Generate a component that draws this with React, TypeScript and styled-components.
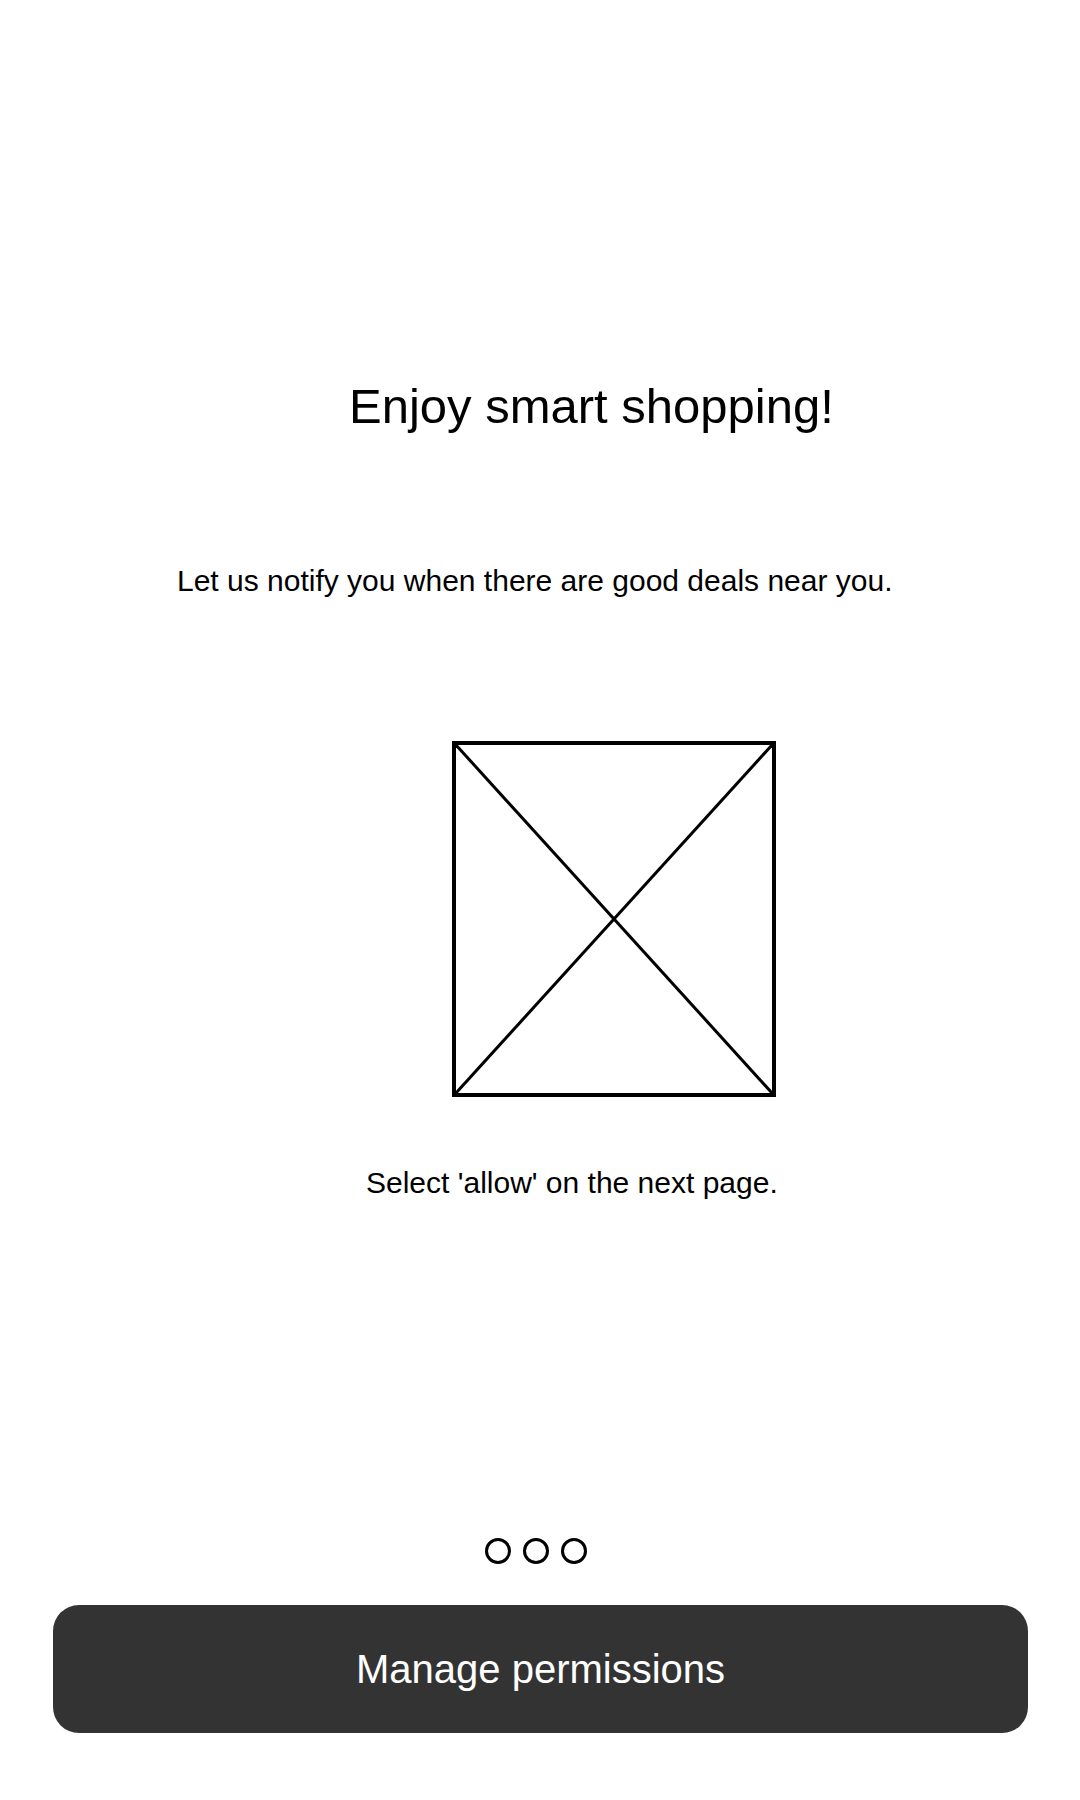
import React from "react";
import styled, { createGlobalStyle } from "styled-components";

const Global = createGlobalStyle`
  html, body { margin: 0; padding: 0; background: #ffffff; }
  body { font-family: "Liberation Sans", Arial, sans-serif; color: #000; }
`;

const Page = styled.main`
  width: 1080px;
  min-height: 1800px;
  display: flex;
  flex-direction: column;
  align-items: flex-start;
  padding-top: 382px;
  box-sizing: border-box;
`;

const Title = styled.h1<{ $left: number }>`
  margin: 0 0 0 ${(p) => p.$left}px;
  font-size: 49px;
  line-height: 48px;
  font-weight: 400;
  white-space: nowrap;
`;

const Text = styled.p<{ $left: number; $top: number }>`
  margin: ${(p) => p.$top}px 0 0 ${(p) => p.$left}px;
  font-size: 30px;
  line-height: 30px;
  white-space: nowrap;
`;

const Placeholder = styled.div<{ $left: number; $top: number }>`
  margin: ${(p) => p.$top}px 0 0 ${(p) => p.$left}px;
  width: 324px;
  height: 356px;
  border: 4px solid #000;
  box-sizing: border-box;
  display: flex;
  svg { width: 100%; height: 100%; display: block; }
`;

const Dots = styled.div`
  margin: 340px 0 0 485px;
  display: flex;
  gap: 12px;
`;

const Dot = styled.span`
  width: 26px;
  height: 26px;
  border: 3px solid #000;
  border-radius: 50%;
  box-sizing: border-box;
`;

const Button = styled.button`
  margin: 41px 0 0 53px;
  width: 975px;
  height: 128px;
  border: none;
  border-radius: 26px;
  background: #333333;
  color: #ffffff;
  font-family: "Liberation Sans", Arial, sans-serif;
  font-size: 40px;
  padding: 0;
  display: flex;
  align-items: center;
  justify-content: center;
  cursor: pointer;
`;

export default function App() {
  return (
    <>
      <Global />
      <Page>
        <Title $left={349}>Enjoy smart shopping!</Title>
        <Text $left={177} $top={136}>
          Let us notify you when there are good deals near you.
        </Text>
        <Placeholder $left={452} $top={145}>
          <svg viewBox="0 0 316 348" preserveAspectRatio="none">
            <line x1="0" y1="0" x2="316" y2="348" stroke="#000" strokeWidth="3" />
            <line x1="316" y1="0" x2="0" y2="348" stroke="#000" strokeWidth="3" />
          </svg>
        </Placeholder>
        <Text $left={366} $top={71}>Select 'allow' on the next page.</Text>
        <Dots>
          <Dot />
          <Dot />
          <Dot />
        </Dots>
        <Button>Manage permissions</Button>
      </Page>
    </>
  );
}
